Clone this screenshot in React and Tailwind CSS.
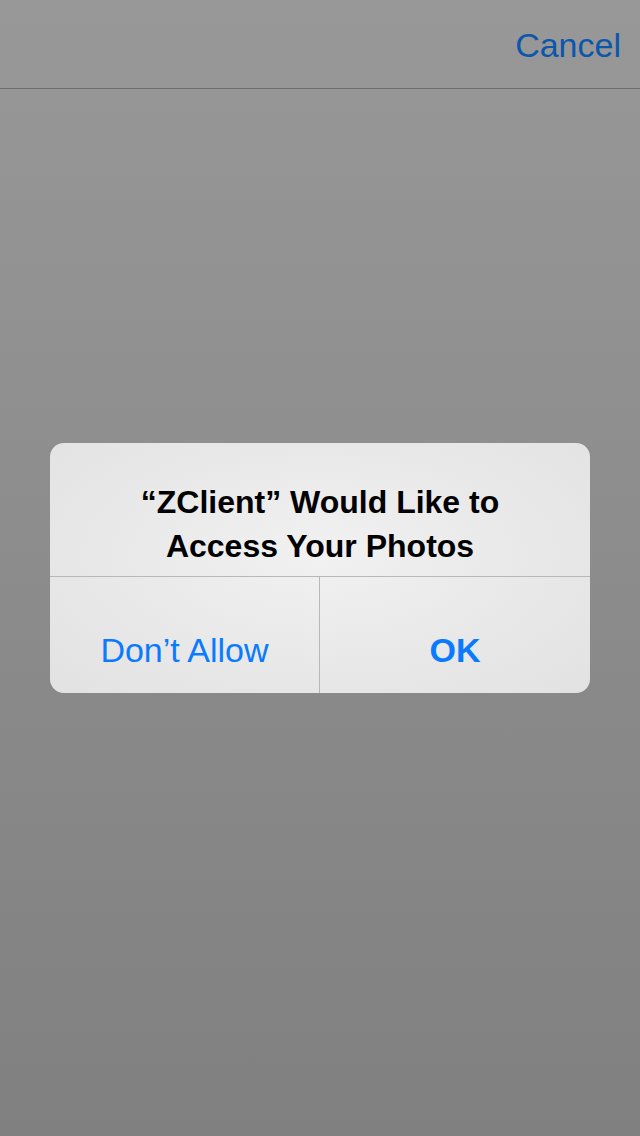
export default function App() {
  return (
    <div
      className="w-[640px] h-[1136px] flex flex-col bg-gradient-to-b from-[#989898] to-[#808080]"
      style={{ fontFamily: '"Liberation Sans", Arial, sans-serif' }}
    >
      {/* dimmed nav bar */}
      <div className="h-[89px] border-b border-[#6e6e6e] flex justify-end items-start pt-[23px] pr-[19px]">
        <span className="text-[34px] leading-[44px] text-[#0c56ab]">Cancel</span>
      </div>

      <div className="flex-1 flex justify-center items-start pt-[354px]">
        <div className="w-[540px] rounded-[14px] overflow-hidden bg-[radial-gradient(ellipse_at_50%_45%,#f1f1f1_0%,#e7e7e7_65%,#e2e2e2_100%)]">
          <div className="h-[133px] flex flex-col items-center pt-[37px] text-black font-bold text-[32px] leading-[44px] text-center">
            <div>“ZClient” Would Like to</div>
            <div>Access Your Photos</div>
          </div>
          <div className="h-[117px] border-t border-[#b8b8b8] flex">
            <div className="w-[270px] border-r border-[#b8b8b8] flex items-start justify-center pt-[51px] text-[34px] leading-[44px] text-[#0a7aff]">
              Don’t Allow
            </div>
            <div className="flex-1 flex items-start justify-center pt-[51px] text-[34px] leading-[44px] font-bold text-[#0a7aff]">
              OK
            </div>
          </div>
        </div>
      </div>
    </div>
  );
}
